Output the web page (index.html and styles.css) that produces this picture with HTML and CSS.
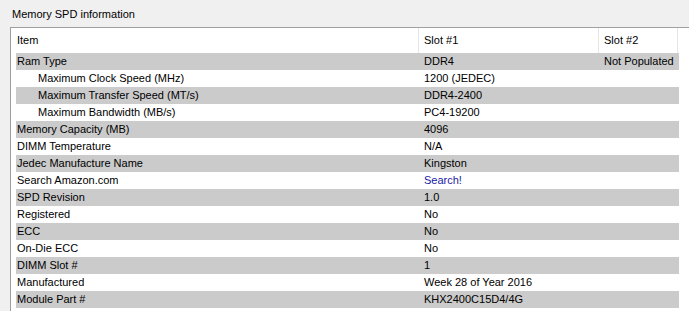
FILE: index.html
```html
<!DOCTYPE html>
<html>
<head>
<meta charset="utf-8">
<link rel="stylesheet" href="styles.css">
</head>
<body>
<div class="title">Memory SPD information</div>
<div class="list">
  <div class="header">
    <div class="hc c1">Item</div>
    <div class="hc c2">Slot #1</div>
    <div class="hc c3">Slot #2</div>
  </div>
  <div class="rows">
    <div class="row alt"><div class="c1">Ram Type</div><div class="c2">DDR4</div><div class="c3">Not Populated</div></div>
    <div class="row"><div class="c1 ind">Maximum Clock Speed (MHz)</div><div class="c2">1200 (JEDEC)</div><div class="c3"></div></div>
    <div class="row alt"><div class="c1 ind">Maximum Transfer Speed (MT/s)</div><div class="c2">DDR4-2400</div><div class="c3"></div></div>
    <div class="row"><div class="c1 ind">Maximum Bandwidth (MB/s)</div><div class="c2">PC4-19200</div><div class="c3"></div></div>
    <div class="row alt"><div class="c1">Memory Capacity (MB)</div><div class="c2">4096</div><div class="c3"></div></div>
    <div class="row"><div class="c1">DIMM Temperature</div><div class="c2">N/A</div><div class="c3"></div></div>
    <div class="row alt"><div class="c1">Jedec Manufacture Name</div><div class="c2">Kingston</div><div class="c3"></div></div>
    <div class="row"><div class="c1">Search Amazon.com</div><div class="c2 link">Search!</div><div class="c3"></div></div>
    <div class="row alt"><div class="c1">SPD Revision</div><div class="c2">1.0</div><div class="c3"></div></div>
    <div class="row"><div class="c1">Registered</div><div class="c2">No</div><div class="c3"></div></div>
    <div class="row alt"><div class="c1">ECC</div><div class="c2">No</div><div class="c3"></div></div>
    <div class="row"><div class="c1">On-Die ECC</div><div class="c2">No</div><div class="c3"></div></div>
    <div class="row alt"><div class="c1">DIMM Slot #</div><div class="c2">1</div><div class="c3"></div></div>
    <div class="row"><div class="c1">Manufactured</div><div class="c2">Week 28 of Year 2016</div><div class="c3"></div></div>
    <div class="row alt"><div class="c1">Module Part #</div><div class="c2">KHX2400C15D4/4G</div><div class="c3"></div></div>
  </div>
</div>
</body>
</html>
```

FILE: styles.css
```css
html, body {
  margin: 0;
  padding: 0;
  background: #f0f0f0;
  font-family: "Liberation Sans", Arial, sans-serif;
  font-size: 11px;
  color: #000;
  overflow: hidden;
  height: 311px;
}
.title {
  height: 27px;
  line-height: 28px;
  padding-left: 12px;
}
.list {
  margin-left: 10px;
  border-left: 1px solid #a0a0a0;
  border-top: 1px solid #a0a0a0;
  background: #fff;
  padding-left: 5px;
  height: 283px;
  overflow: hidden;
}
.header {
  display: grid;
  grid-template-columns: 402px 180px 80px;
  height: 25px;
}
.hc {
  line-height: 25px;
}
.header .c1 { padding-left: 1px; }
.header .c2 { border-left: 1px solid #e5e5e5; padding-left: 5px; }
.header .c3 { border-left: 1px solid #e5e5e5; border-right: 1px solid #e5e5e5; padding-left: 5px; }
.rows {
  width: 663px;
}
.row {
  display: grid;
  grid-template-columns: 402px 180px 81px;
  height: 17px;
  line-height: 17px;
  white-space: nowrap;
}
.row.alt { background: #cbcbcb; }
.row .c1 { padding-left: 1px; }
.row .c1.ind { padding-left: 22px; }
.row .c2 { padding-left: 6px; }
.row .c3 { padding-left: 6px; }
.link { color: #1a1aa6; }
```
